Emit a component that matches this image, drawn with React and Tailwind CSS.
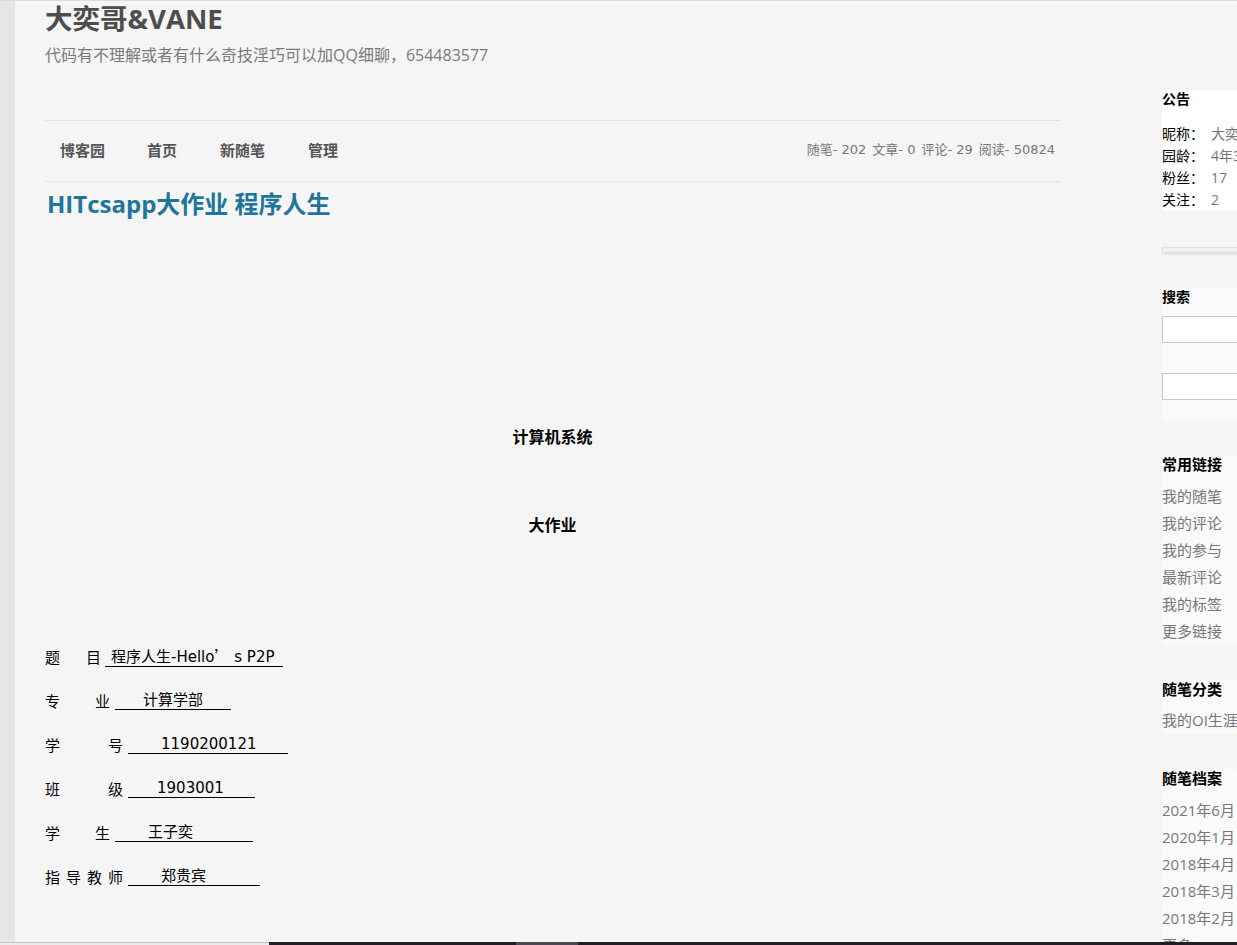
import React from "react";

const navItems = ["博客园", "首页", "新随笔", "管理"];
const links = ["我的随笔", "我的评论", "我的参与", "最新评论", "我的标签", "更多链接"];
const archives = ["2021年6月", "2020年1月", "2018年4月", "2018年3月", "2018年2月", "更多"];
const stats = ["随笔- 202", "文章- 0", "评论- 29", "阅读- 50824"];

const FormRow = ({ label, underlineW, padL, value }) => (
  <div className="flex items-center h-[24px] text-[15px] text-black">
    {label}
    <span
      className={`inline-block leading-[17px] border-b border-black whitespace-nowrap ${underlineW} ${padL}`}
      style={{ fontFamily: '"DejaVu Sans", "Noto Sans CJK SC", sans-serif' }}
    >
      {value}
    </span>
  </div>
);

const App = () => {
  return (
    <div
      className="w-[1237px] h-[945px] overflow-hidden bg-[#f5f5f5] flex flex-col"
      style={{ fontFamily: '"Open Sans", "Noto Sans CJK SC", sans-serif' }}
    >
      <div className="h-[1px] bg-[#dcdcdc] shrink-0" />

      <div className="flex flex-1 min-h-0">
        <div className="w-[15px] shrink-0 bg-[#e6e6e6]" />

        {/* main column */}
        <div className="w-[1015px] shrink-0 ml-[30px] mr-[102px]">
          <div className="h-[36px] leading-[36px] text-[27.5px] font-bold text-[#4d4d4d]">
            大奕哥&VANE
          </div>
          <div className="mt-[6px] leading-[24px] text-[16px] text-[#7a7a7a]">
            代码有不理解或者有什么奇技淫巧可以加QQ细聊，654483577
          </div>

          <div className="mt-[53px] h-[62px] border-y border-[#e3e3e3] flex items-center justify-between">
            <div className="flex items-center text-[15px] font-bold text-[#555] -mt-[2px]">
              {navItems.map((item, i) => (
                <span
                  key={item}
                  className={
                    i === 0 ? "ml-[15px]" : i === 1 ? "ml-[42px]" : "ml-[43px]"
                  }
                >
                  {item}
                </span>
              ))}
            </div>
            <div
              className="mr-[5px] -mt-[2px] flex gap-[6px] text-[13px] text-[#777] whitespace-pre"
              style={{ fontFamily: '"DejaVu Sans", "Noto Sans CJK SC", sans-serif' }}
            >
              {stats.map((s) => (
                <span key={s}>{s}</span>
              ))}
            </div>
          </div>

          <h1 className="mt-[6px] ml-[2px] leading-[32px] text-[24px] font-bold text-[#21759b]">
            HITcsapp大作业 程序人生
          </h1>

          <div className="mt-[205px] leading-[24px] text-[16px] font-bold text-black text-center">
            计算机系统
          </div>
          <div className="mt-[64px] leading-[24px] text-[16px] font-bold text-black text-center">
            大作业
          </div>

          <div className="mt-[108px] flex flex-col gap-[20px]">
            <FormRow
              label={
                <>
                  <span>题</span>
                  <span className="ml-[26px] mr-[4px]">目</span>
                </>
              }
              underlineW="w-[178px]"
              padL="pl-[6px]"
              value={
                <>
                  程序人生-Hello
                  <span style={{ fontFamily: '"Noto Sans CJK SC", sans-serif' }}>’</span>
                  {" s P2P"}
                </>
              }
            />
            <FormRow
              label={
                <>
                  <span>专</span>
                  <span className="ml-[35px] mr-[5px]">业</span>
                </>
              }
              underlineW="w-[116px]"
              padL="pl-[28px]"
              value="计算学部"
            />
            <FormRow
              label={
                <>
                  <span>学</span>
                  <span className="ml-[48px] mr-[5px]">号</span>
                </>
              }
              underlineW="w-[160px]"
              padL="pl-[33px]"
              value="1190200121"
            />
            <FormRow
              label={
                <>
                  <span>班</span>
                  <span className="ml-[48px] mr-[5px]">级</span>
                </>
              }
              underlineW="w-[127px]"
              padL="pl-[29px]"
              value="1903001"
            />
            <FormRow
              label={
                <>
                  <span>学</span>
                  <span className="ml-[35px] mr-[5px]">生</span>
                </>
              }
              underlineW="w-[138px]"
              padL="pl-[33px]"
              value="王子奕"
            />
            <FormRow
              label={
                <span className="flex gap-[6px] mr-[5px]">
                  <span>指</span>
                  <span>导</span>
                  <span>教</span>
                  <span>师</span>
                </span>
              }
              underlineW="w-[132px]"
              padL="pl-[33px]"
              value="郑贵宾"
            />
          </div>
        </div>

        {/* sidebar */}
        <div className="w-[220px] shrink-0 text-[15px]">
          <div className="mt-[89px] bg-white">
            <div className="leading-[18px] text-[14px] font-bold text-black">公告</div>
            <div className="mt-[15px] leading-[22px] text-[14px]">
              <div className="whitespace-nowrap">
                <span className="text-black">昵称：</span>
                <span className="ml-[7px] text-[#777]">大奕哥&VANE</span>
              </div>
              <div className="whitespace-nowrap">
                <span className="text-black">园龄：</span>
                <span className="ml-[7px] text-[#777]">4年3个月</span>
              </div>
              <div className="whitespace-nowrap">
                <span className="text-black">粉丝：</span>
                <span className="ml-[7px] text-[#777]">17</span>
              </div>
              <div className="whitespace-nowrap">
                <span className="text-black">关注：</span>
                <span className="ml-[7px] text-[#777]">2</span>
              </div>
            </div>
          </div>

          <div className="mt-[36px] h-[6px] bg-[#f2f2f2] border border-[#e0e0e0] shadow-[0_1px_2px_rgba(0,0,0,0.12)]" />

          <div className="mt-[35px] bg-[#fafafa] pb-[20px]">
            <div className="leading-[18px] text-[14px] font-bold text-black">搜索</div>
            <div className="mt-[10px] h-[27px] bg-white border border-[#c8c8c8]" />
            <div className="mt-[30px] h-[27px] bg-white border border-[#c8c8c8]" />
          </div>

          <div className="mt-[35px] bg-[#fafafa]">
            <div className="leading-[18px] text-[15px] font-bold text-black">常用链接</div>
            <div className="mt-[10px]">
              {links.map((l) => (
                <div key={l} className="leading-[27px] text-[#777]">
                  {l}
                </div>
              ))}
            </div>
          </div>

          <div className="mt-[35px] bg-[#fafafa]">
            <div className="leading-[18px] text-[15px] font-bold text-black">随笔分类</div>
            <div className="mt-[9px] leading-[27px] text-[#777] whitespace-nowrap">
              我的OI生涯(8)
            </div>
          </div>

          <div className="mt-[35px] bg-[#fafafa]">
            <div className="leading-[18px] text-[15px] font-bold text-black">随笔档案</div>
            <div className="mt-[10px]">
              {archives.map((a) => (
                <div key={a} className="leading-[27px] text-[#777] whitespace-nowrap">
                  {a}
                </div>
              ))}
            </div>
          </div>
        </div>
      </div>

      <div className="h-[3px] shrink-0 flex">
        <div className="w-[269px] bg-[#ececec] border-t border-[#c6c6c6]" />
        <div className="w-[247px] bg-[#231c2b]" />
        <div className="w-[62px] bg-[#4e4757]" />
        <div className="flex-1 bg-[#231c2b]" />
      </div>
    </div>
  );
};

export default App;
